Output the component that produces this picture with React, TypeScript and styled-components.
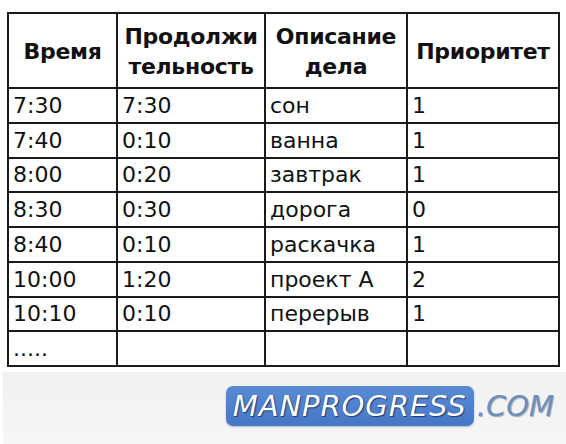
import React from "react";
import styled, { createGlobalStyle } from "styled-components";

const Global = createGlobalStyle`
  html, body { margin: 0; padding: 0; background: #ffffff; }
  body { width: 566px; height: 444px; overflow: hidden; font-family: "DejaVu Sans", "Liberation Sans", sans-serif; }
`;

const Page = styled.div`
  display: flex;
  flex-direction: column;
  width: 566px;
  height: 444px;
  padding-top: 12px;
  box-sizing: border-box;
  background: #ffffff;
`;

const Table = styled.table`
  margin-left: 7px;
  width: 551px;
  border-collapse: collapse;
  table-layout: fixed;
  color: #111111;
`;

const HeadCell = styled.th`
  border: 2px solid #1a1a1a;
  height: 71px;
  padding: 2px 1px 0;
  font-size: 22px;
  font-weight: bold;
  line-height: 30px;
  text-align: center;
  vertical-align: middle;
  letter-spacing: -0.3px;
  white-space: nowrap;
`;

const Row = styled.tr`
  height: 34.75px;
`;

const Cell = styled.td`
  border: 2px solid #1a1a1a;
  padding: 0 0 3px 4px;
  font-size: 22px;
  line-height: 26px;
  vertical-align: bottom;
  white-space: nowrap;
  overflow: hidden;
`;

const Footer = styled.div`
  flex: 1;
  margin-top: 5px;
  margin-left: 3px;
  background: linear-gradient(#f1f1f1, #f6f6f6);
  display: flex;
  align-items: flex-start;
  justify-content: flex-end;
  padding: 14px 12px 0 0;
`;

const LogoBox = styled.div`
  width: 248px;
  height: 40px;
  border-radius: 7px;
  background: linear-gradient(#5a8bd6, #4677c6);
  box-shadow: 0 1px 2px rgba(40, 70, 120, 0.35);
  display: flex;
  align-items: center;
  justify-content: center;
  color: #ffffff;
  font-family: "DejaVu Sans", sans-serif;
  font-style: italic;
  font-size: 29px;
  letter-spacing: 0.9px;
  text-shadow: 1px 1px 1px #1c3a6e, -0.5px -0.5px 0 #2e5596;
`;

const Dotcom = styled.div`
  height: 40px;
  display: flex;
  align-items: center;
  margin-left: 3px;
  color: #6d8fbb;
  font-family: "DejaVu Sans", sans-serif;
  font-style: italic;
  font-size: 29px;
  text-shadow: 1px 1px 1px #9aa5b3;
`;

type Item = { time: string; dur: string; desc: string; prio: string };

const rows: Item[] = [
  { time: "7:30", dur: "7:30", desc: "сон", prio: "1" },
  { time: "7:40", dur: "0:10", desc: "ванна", prio: "1" },
  { time: "8:00", dur: "0:20", desc: "завтрак", prio: "1" },
  { time: "8:30", dur: "0:30", desc: "дорога", prio: "0" },
  { time: "8:40", dur: "0:10", desc: "раскачка", prio: "1" },
  { time: "10:00", dur: "1:20", desc: "проект А", prio: "2" },
  { time: "10:10", dur: "0:10", desc: "перерыв", prio: "1" },
  { time: ".....", dur: "", desc: "", prio: "" },
];

export default function App() {
  return (
    <Page>
      <Global />
      <Table>
        <colgroup>
          <col style={{ width: 109 }} />
          <col style={{ width: 148 }} />
          <col style={{ width: 142 }} />
          <col style={{ width: 152 }} />
        </colgroup>
        <thead>
          <tr>
            <HeadCell>Время</HeadCell>
            <HeadCell>
              Продолжи
              <br />
              тельность
            </HeadCell>
            <HeadCell>
              Описание
              <br />
              дела
            </HeadCell>
            <HeadCell>Приоритет</HeadCell>
          </tr>
        </thead>
        <tbody>
          {rows.map((r, i) => (
            <Row key={i}>
              <Cell>{r.time}</Cell>
              <Cell>{r.dur}</Cell>
              <Cell>{r.desc}</Cell>
              <Cell>{r.prio}</Cell>
            </Row>
          ))}
        </tbody>
      </Table>
      <Footer>
        <LogoBox>MANPROGRESS</LogoBox>
        <Dotcom>.COM</Dotcom>
      </Footer>
    </Page>
  );
}
